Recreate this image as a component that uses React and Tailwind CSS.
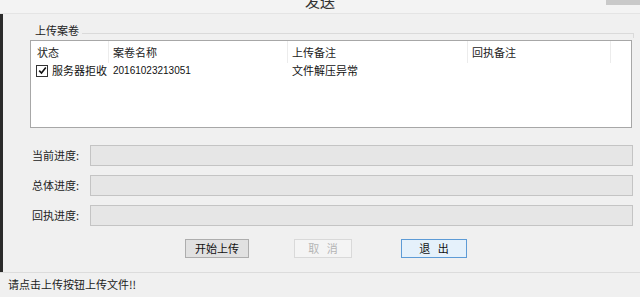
import React from 'react';

const cjk = { fontFamily: '"Noto Sans CJK SC", "Microsoft YaHei", sans-serif' };

const ProgressRow = ({ label }) => (
  <div className="flex items-center h-[21px]">
    <div className="w-[58px] ml-[29px] text-[11px] text-[#222] leading-none">{label}</div>
    <div className="w-[543px] h-[21px] bg-[#e6e6e6] border border-[#c4c4c4]" />
  </div>
);

const Btn = ({ children, className, disabled, active }) => (
  <button
    disabled={disabled}
    className={
      'h-[19px] text-[11px] leading-none border ' +
      (disabled
        ? 'text-[#b5b5b5] border-[#d9d9d9] bg-[#f4f4f4] '
        : active
        ? 'text-[#111] border-[#5d9bd6] bg-[#e5f1fb] '
        : 'text-[#111] border-[#adadad] bg-[#e1e1e1] ') +
      className
    }
  >
    {children}
  </button>
);

export default function App() {
  return (
    <div className="w-[640px] h-[297px] bg-[#f0f0f0] flex flex-col overflow-hidden select-none" style={cjk}>
      {/* window title */}
      <div className="h-[14px] bg-[#f3f3f3] border-b border-[#e4e4e4] flex relative">
        <div className="flex-1 flex justify-center overflow-hidden">
          <span className="text-[15px] leading-none text-[#333] -mt-[7px]">发送</span>
        </div>
        <div className="absolute right-0 top-0 w-[34px] h-[5px] bg-[#c9c9c9]" />
      </div>

      {/* main */}
      <div className="flex-1 border-l-[3px] border-[#2b2b2b] flex flex-col">
        <div className="flex items-end h-[23px] pl-[32px] pr-[6px]">
          <span className="text-[11px] leading-none text-[#222] pb-[1px] pr-[3px]">上传案卷</span>
          <div className="flex-1 h-[5px] border-t border-r border-[#dadada] self-end mb-[-1px]" />
        </div>

        {/* list */}
        <div className="ml-[27px] w-[602px] h-[88px] mt-[3px] bg-white border border-[#a7a7a7]">
          <div className="flex h-[22px] items-center text-[11px] text-[#222] leading-none">
            <div className="w-[78px] h-full flex items-center pl-[6px] border-r border-[#ececec]">状态</div>
            <div className="w-[179px] h-full flex items-center pl-[4px] border-r border-[#ececec]">案卷名称</div>
            <div className="w-[180px] h-full flex items-center pl-[4px] border-r border-[#ececec]">上传备注</div>
            <div className="w-[143px] h-full flex items-center pl-[4px] border-r border-[#ececec]">回执备注</div>
          </div>
          <div className="flex h-[15px] items-center text-[11px] text-[#111] leading-none">
            <div className="w-[78px] flex items-center pl-[5px]">
              <span className="w-[12px] h-[12px] border border-[#333] bg-white flex items-center justify-center mr-[4px]">
                <svg width="9" height="9" viewBox="0 0 9 9">
                  <path d="M1.2 4.6 L3.5 7 L7.8 1.6" fill="none" stroke="#111" strokeWidth="1.6" />
                </svg>
              </span>
              服务器拒收
            </div>
            <div className="w-[179px] pl-[4px] text-[10px]" style={{ fontFamily: '"Liberation Sans", Arial, sans-serif' }}>
              20161023213051
            </div>
            <div className="w-[180px] pl-[4px]">文件解压异常</div>
          </div>
        </div>

        <div className="mt-[17px] flex flex-col gap-[9px]">
          <ProgressRow label="当前进度:" />
          <ProgressRow label="总体进度:" />
          <ProgressRow label="回执进度:" />
        </div>

        <div className="flex mt-[13px]">
          <Btn className="ml-[182px] w-[64px]">开始上传</Btn>
          <Btn disabled className="ml-[45px] w-[58px]">取&nbsp;&nbsp;&nbsp;消</Btn>
          <Btn active className="ml-[49px] w-[66px]">退&nbsp;&nbsp;&nbsp;出</Btn>
        </div>
      </div>

      {/* status bar */}
      <div className="h-[25px] border-t border-[#dcdcdc] flex items-center pl-[8px] pb-[2px]">
        <span className="text-[11px] leading-none text-[#222]">请点击上传按钮上传文件!!</span>
      </div>
    </div>
  );
}
